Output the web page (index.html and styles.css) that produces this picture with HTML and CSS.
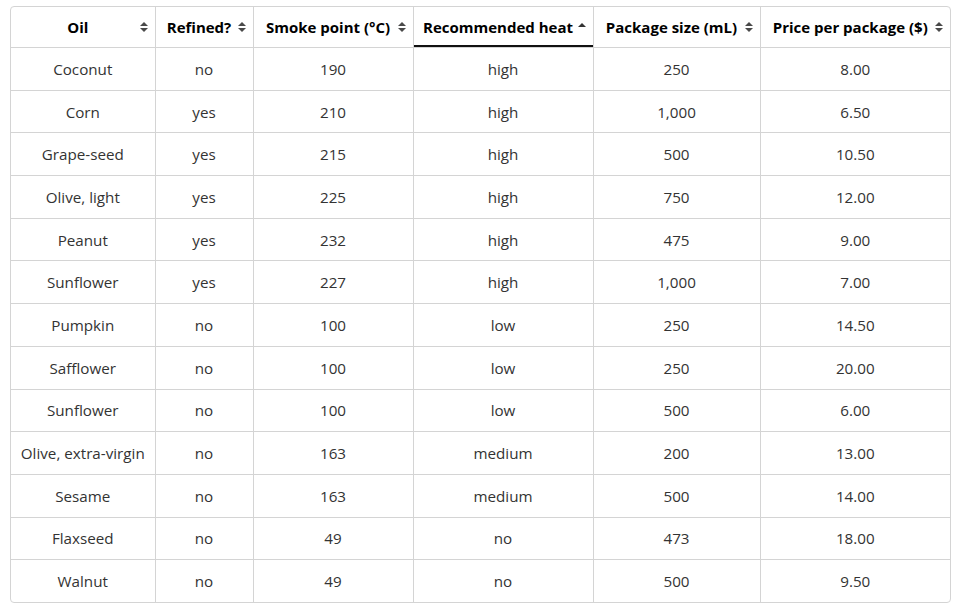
FILE: index.html
```html
<!DOCTYPE html>
<html>
<head>
<meta charset="utf-8">
<link rel="stylesheet" href="styles.css">
</head>
<body>
<div class="wrap">
<table class="oils">
<colgroup>
<col class="c1"><col class="c2"><col class="c3"><col class="c4"><col class="c5"><col class="c6">
</colgroup>
<thead>
<tr>
<th><div class="hd"><span class="lbl">Oil</span><span class="sort both"></span></div></th>
<th><div class="hd"><span class="lbl">Refined?</span><span class="sort both"></span></div></th>
<th><div class="hd"><span class="lbl">Smoke point (°C)</span><span class="sort both"></span></div></th>
<th class="active"><div class="hd"><span class="lbl">Recommended heat</span><span class="sort up"></span></div></th>
<th><div class="hd"><span class="lbl">Package size (mL)</span><span class="sort both"></span></div></th>
<th><div class="hd"><span class="lbl">Price per package ($)</span><span class="sort both"></span></div></th>
</tr>
</thead>
<tbody>
<tr><td>Coconut</td><td>no</td><td>190</td><td>high</td><td>250</td><td>8.00</td></tr>
<tr><td>Corn</td><td>yes</td><td>210</td><td>high</td><td>1,000</td><td>6.50</td></tr>
<tr><td>Grape-seed</td><td>yes</td><td>215</td><td>high</td><td>500</td><td>10.50</td></tr>
<tr><td>Olive, light</td><td>yes</td><td>225</td><td>high</td><td>750</td><td>12.00</td></tr>
<tr><td>Peanut</td><td>yes</td><td>232</td><td>high</td><td>475</td><td>9.00</td></tr>
<tr><td>Sunflower</td><td>yes</td><td>227</td><td>high</td><td>1,000</td><td>7.00</td></tr>
<tr><td>Pumpkin</td><td>no</td><td>100</td><td>low</td><td>250</td><td>14.50</td></tr>
<tr><td>Safflower</td><td>no</td><td>100</td><td>low</td><td>250</td><td>20.00</td></tr>
<tr><td>Sunflower</td><td>no</td><td>100</td><td>low</td><td>500</td><td>6.00</td></tr>
<tr><td>Olive, extra-virgin</td><td>no</td><td>163</td><td>medium</td><td>200</td><td>13.00</td></tr>
<tr><td>Sesame</td><td>no</td><td>163</td><td>medium</td><td>500</td><td>14.00</td></tr>
<tr><td>Flaxseed</td><td>no</td><td>49</td><td>no</td><td>473</td><td>18.00</td></tr>
<tr><td>Walnut</td><td>no</td><td>49</td><td>no</td><td>500</td><td>9.50</td></tr>
</tbody>
</table>
</div>
</body>
</html>
```
FILE: styles.css
```css
html, body { margin: 0; padding: 0; background: #fff; }
body { padding: 6px 0 0 10px; font-family: "Open Sans", "DejaVu Sans", sans-serif; }
.wrap {
  width: 939px;
  border: 1px solid #d4d4d4;
  border-radius: 4px;
  overflow: hidden;
}
.oils {
  width: 939px;
  border-collapse: collapse;
  table-layout: fixed;
  font-size: 15.2px;
  color: #333;
}
.c1 { width: 144px; } .c2 { width: 98px; } .c3 { width: 160px; }
.c4 { width: 180px; } .c5 { width: 167px; } .c6 { width: 190px; }
.oils th, .oils td { border: 1px solid #d4d4d4; padding: 0; }
.oils tr > :first-child { border-left: none; }
.oils tr > :last-child { border-right: none; }
.oils thead th { border-top: none; height: 40px; font-weight: bold; color: #000; font-size: 15px; }
.oils tbody tr:last-child td { border-bottom: none; }
.oils td { text-align: center; height: 41.7px; }
.oils th.active { border-bottom: 1px solid #d4d4d4; box-shadow: inset 0 -2px 0 #111; }
.hd { display: flex; align-items: center; padding: 0 7px 0 9px; }
.lbl { flex: 1; text-align: center; white-space: nowrap; }
.sort { width: 8px; height: 10px; margin-left: 4px; position: relative; flex: none; }
.sort::before, .sort::after {
  content: ""; position: absolute; left: 0; width: 0; height: 0;
  border-left: 4px solid transparent; border-right: 4px solid transparent;
}
.sort.both::before { top: 0; border-bottom: 4.5px solid #4a4a4a; }
.sort.both::after { bottom: 0; border-top: 4.5px solid #4a4a4a; }
.sort.up::before { top: 1px; border-bottom: 4.5px solid #333; }
```
